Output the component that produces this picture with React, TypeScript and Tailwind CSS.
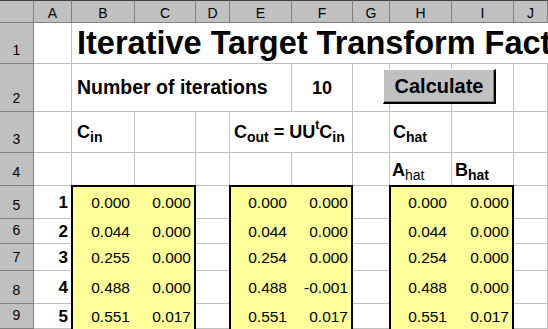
const cols = ["A", "B", "C", "D", "E", "F", "G", "H", "I", "J"];

const data: [string, string][][] = [
  [["0.000", "0.000"], ["0.000", "0.000"], ["0.000", "0.000"]],
  [["0.044", "0.000"], ["0.044", "0.000"], ["0.044", "0.000"]],
  [["0.255", "0.000"], ["0.254", "0.000"], ["0.254", "0.000"]],
  [["0.488", "0.000"], ["0.488", "-0.001"], ["0.488", "0.000"]],
  [["0.551", "0.017"], ["0.551", "0.017"], ["0.551", "0.017"]],
];

const rowH = ["h-[32px]", "h-[25px]", "h-[27px]", "h-[33px]", "h-[25px]"];

const RowHead = ({ n }: { n: number }) => (
  <div className="bg-[#c0c0c0] border-r border-b border-[#808080] flex items-end justify-center pb-[6px] text-[14px] leading-none">
    {n}
  </div>
);

const Cell = ({ className = "", children }: { className?: string; children?: React.ReactNode }) => (
  <div className={`border-r border-b border-[#c0c0c0] flex items-center whitespace-nowrap overflow-visible ${className}`}>
    {children}
  </div>
);

const Box = ({ pos, first, idx }: { pos: string; first: string; idx: number }) => (
  <div className={`${pos} row-start-6 row-span-5 -ml-px -mt-px bg-[#ffff99] border-2 border-b-0 border-black grid ${first} grid-rows-[32px_25px_27px_33px_25px] text-[15.5px] leading-none`}>
    {data.map((row, i) => (
      <div key={i} className="contents">
        <div className={`${rowH[i]} flex items-center justify-end pr-[5px]`}>{row[idx][0]}</div>
        <div className={`${rowH[i]} flex items-center justify-end pr-[3px]`}>{row[idx][1]}</div>
      </div>
    ))}
  </div>
);

export default function App() {
  return (
    <div className="relative w-[548px] h-[329px] overflow-hidden bg-white text-black font-['Liberation_Sans',Arial,sans-serif]">
      <div className="grid grid-cols-[34px_38px_63px_61px_34px_62px_61px_37px_62px_62px_34px] grid-rows-[23px_41px_48px_41px_33px_33px_25px_27px_33px_25px]">
        {/* column headers */}
        <div className="bg-[#c0c0c0] border-t border-t-[#404040] border-r border-b border-[#808080]" />
        {cols.map((c) => (
          <div
            key={c}
            className="bg-[#c0c0c0] border-t border-t-[#404040] border-r border-b border-[#808080] flex items-center justify-center pt-[2px] text-[14px] leading-none"
          >
            {c}
          </div>
        ))}

        {/* row 1 */}
        <RowHead n={1} />
        <Cell />
        <div className="col-span-9 border-b border-[#c0c0c0] flex items-center pl-[5px] overflow-hidden whitespace-nowrap font-bold text-[32.5px] leading-none">
          Iterative Target Transform Factor Analysis
        </div>

        {/* row 2 */}
        <RowHead n={2} />
        <Cell />
        <Cell className="col-span-4 pl-[5px] font-bold text-[19.5px] leading-none">Number of iterations</Cell>
        <Cell className="justify-center font-bold text-[18px] leading-none">10</Cell>
        <Cell />
        <Cell />
        <Cell />
        <Cell />

        {/* row 3 */}
        <RowHead n={3} />
        <Cell />
        <Cell className="pl-[5px] font-bold text-[18px] leading-none">
          C<span className="relative top-[5px] text-[14px]">in</span>
        </Cell>
        <Cell />
        <Cell />
        <Cell className="col-span-2 pl-[4px] font-bold text-[18px] leading-none">
          C<span className="relative top-[5px] text-[14px]">out</span>
          <span className="ml-[5px]">= UU</span>
          <span className="relative -top-[7px] text-[12px]">t</span>C
          <span className="relative top-[5px] text-[14px]">in</span>
        </Cell>
        <Cell />
        <Cell className="pl-[3px] font-bold text-[18px] leading-none">
          C<span className="relative top-[5px] text-[14px]">hat</span>
        </Cell>
        <Cell />
        <Cell />

        {/* row 4 */}
        <RowHead n={4} />
        <Cell />
        <Cell />
        <Cell />
        <Cell />
        <Cell />
        <Cell />
        <Cell />
        <Cell className="pl-[2px] pt-[2px] font-bold text-[18px] leading-none">
          A<span className="relative top-[5px] text-[14px] font-normal">hat</span>
        </Cell>
        <Cell className="pl-[3px] pt-[2px] font-bold text-[18px] leading-none">
          B<span className="relative top-[5px] text-[14px]">hat</span>
        </Cell>
        <Cell />

        {/* rows 5-9 */}
        {[1, 2, 3, 4, 5].map((n) => (
          <div key={n} className="contents">
            <RowHead n={n + 4} />
            <Cell className="justify-end pr-[3px] font-bold text-[17px] leading-none">{n}</Cell>
            <Cell />
            <Cell />
            <Cell />
          </div>
        ))}

        <Box pos="col-start-3 col-span-2" first="grid-cols-[62px_1fr]" idx={0} />
        <Box pos="col-start-6 col-span-2" first="grid-cols-[61px_1fr]" idx={1} />
        <Box pos="col-start-9 col-span-2" first="grid-cols-[61px_1fr]" idx={2} />
      </div>

      <button className="absolute left-[383px] top-[69px] w-[113px] h-[35px] bg-[#c0c0c0] border-t border-l border-t-white border-l-white border-b-2 border-r-2 border-b-black border-r-black shadow-[inset_-1px_-1px_0_#808080] font-bold text-[20px] leading-none">
        Calculate
      </button>
    </div>
  );
}
